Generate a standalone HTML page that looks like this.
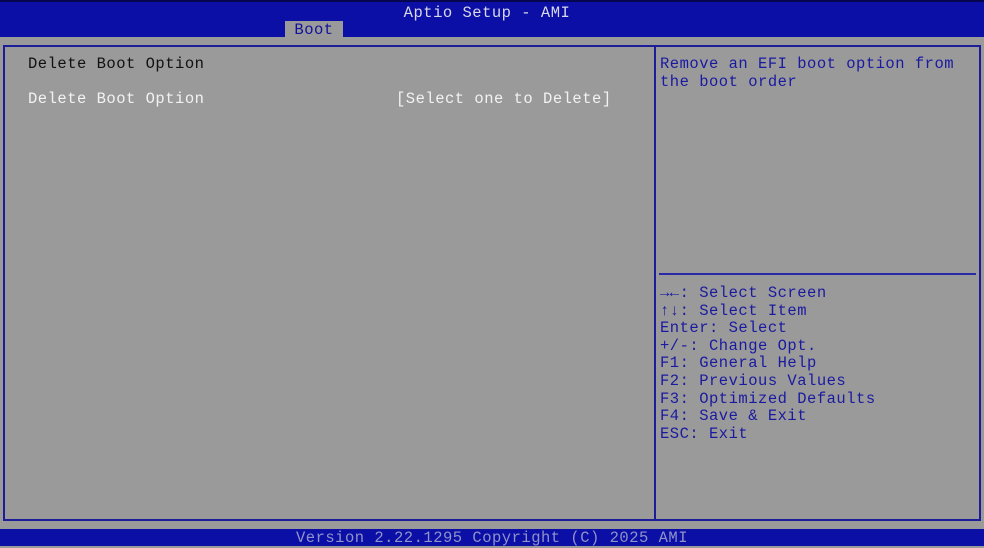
<!DOCTYPE html>
<html><head><style>
*{margin:0;padding:0}
body{width:984px;height:546px;background:#9a9a9a;position:relative;overflow:hidden;font-family:"Liberation Mono",monospace;font-size:15.5px;letter-spacing:0.5px}
.t{position:absolute;white-space:pre;line-height:17.6px}
#top{position:absolute;left:0;top:0;width:984px;height:37px;background:#0b0fa6;border-top:2px solid #050550;box-sizing:border-box}
#tab{position:absolute;left:285px;top:19px;width:58px;height:18px;background:#9a9a9a;color:#10129a;text-align:center;line-height:19px}
#box{position:absolute;left:3px;top:45px;width:978px;height:476px;border:2px solid #1d1d9a;box-sizing:border-box}
#div{position:absolute;left:654px;top:45px;width:2px;height:476px;background:#1d1d9a}
#hl{position:absolute;left:659px;top:273px;width:317px;height:2px;background:#2a2aa8}
#foot{position:absolute;left:0;top:529px;width:984px;height:17px;background:#0b0fa6;color:#8f93c8;text-align:center;line-height:19px}
.b{color:#1a1aa0}
</style></head><body>
<div id="top"><div class="t" style="left:0;width:974px;text-align:center;top:3px;color:#d8d8e8">Aptio Setup - AMI</div><div id="tab">Boot</div></div>
<div id="box"></div><div id="div"></div><div id="hl"></div>
<div class="t" style="left:28px;top:56px;color:#111">Delete Boot Option</div>
<div class="t" style="left:28px;top:91px;color:#f2f2f2">Delete Boot Option</div>
<div class="t" style="left:396px;top:91px;color:#f2f2f2">[Select one to Delete]</div>
<div class="t b" style="left:660px;top:56px">Remove an EFI boot option from
the boot order</div>
<div class="t b" style="left:660px;top:285px"><b>→←</b>: Select Screen
<b>↑↓</b>: Select Item
Enter: Select
+/-: Change Opt.
F1: General Help
F2: Previous Values
F3: Optimized Defaults
F4: Save &amp; Exit
ESC: Exit</div>
<div id="foot">Version 2.22.1295 Copyright (C) 2025 AMI</div>
</body></html>
